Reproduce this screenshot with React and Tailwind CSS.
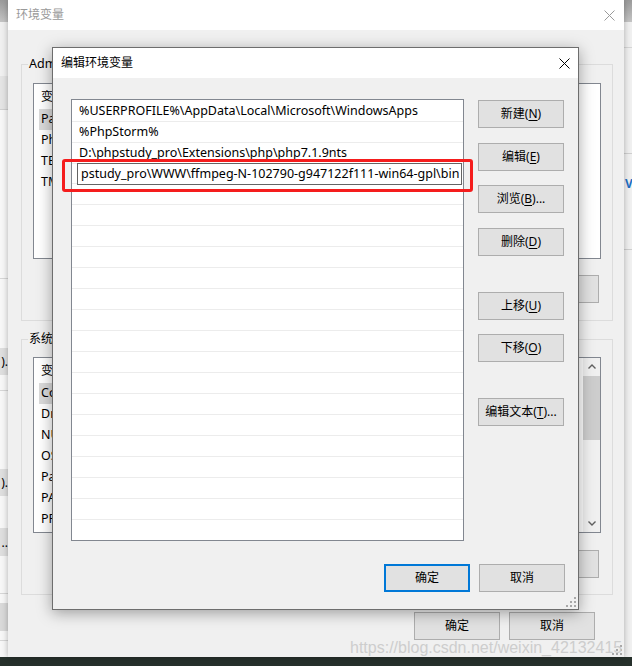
import React from "react";

const ui = "font-['Noto_Sans','Noto_Sans_CJK_SC',sans-serif]";

const Key = ({ k }) => <span className="underline underline-offset-[2px]">{k}</span>;

const CloseX = ({ color }) => (
  <svg width="11" height="11" viewBox="0 0 11 11">
    <path d="M0.5 0.5L10.5 10.5M10.5 0.5L0.5 10.5" stroke={color} strokeWidth="1" fill="none" />
  </svg>
);

const Grip = () => (
  <svg width="10" height="10" viewBox="0 0 10 10">
    <g fill="#a8a8a8">
      <rect x="8" y="0" width="2" height="2" />
      <rect x="4" y="4" width="2" height="2" />
      <rect x="8" y="4" width="2" height="2" />
      <rect x="0" y="8" width="2" height="2" />
      <rect x="4" y="8" width="2" height="2" />
      <rect x="8" y="8" width="2" height="2" />
    </g>
  </svg>
);

const Chevron = ({ down }) => (
  <svg width="8" height="5" viewBox="0 0 8 5">
    <path d={down ? "M0.5 0.5L4 4L7.5 0.5" : "M0.5 4.5L4 1L7.5 4.5"} stroke="#606060" strokeWidth="1.4" fill="none" />
  </svg>
);

function Button({ children, primary = false, className = "" }) {
  return (
    <div
      className={`flex h-[28px] w-[86px] shrink-0 items-center justify-center bg-[#e1e1e1] text-[12px] text-black ${
        primary ? "border-2 border-[#0078d7]" : "border border-[#adadad]"
      } ${className}`}
    >
      {children}
    </div>
  );
}

// only the first letters of these lists show beside the dialog
const userVars = ["Path", "PhpStorm", "TEMP", "TMP"];
const sysVars = ["ComSpec", "DriverData", "NUMBER_OF_PROCESSORS", "OS", "Path", "PATHEXT", "PROCESSOR_ARCHITECTURE"];

function VarList({ rows, scroll, className = "" }) {
  return (
    <div className={`flex h-[176px] border border-[#828790] bg-white ${className}`}>
      <div className="min-w-0 flex-1 overflow-hidden">
        <div className="flex h-[25px] items-center pl-[7px] text-[12px]">变量</div>
        {rows.map((name, i) => (
          <div
            key={name}
            className={`mx-[5px] flex h-[21px] w-[150px] items-center whitespace-nowrap pl-[2px] text-[12.5px] ${
              i === 0 ? "bg-[#dadada]" : ""
            }`}
          >
            {name}
          </div>
        ))}
      </div>
      {scroll && (
        <div className="flex w-[17px] flex-col bg-[#f0f0f0]">
          <div className="flex h-[17px] items-center justify-center">
            <Chevron />
          </div>
          <div className="mt-[1px] h-[64px] bg-[#cdcdcd]" />
          <div className="flex-1" />
          <div className="flex h-[17px] items-center justify-center">
            <Chevron down />
          </div>
        </div>
      )}
    </div>
  );
}

const pathRows = [
  "%USERPROFILE%\\AppData\\Local\\Microsoft\\WindowsApps",
  "%PhpStorm%",
  "D:\\phpstudy_pro\\Extensions\\php\\php7.1.9nts",
];

export default function App() {
  return (
    <div className={`relative h-[666px] w-[632px] overflow-hidden bg-[#26302b] text-black ${ui}`}>
      {/* window behind, left edge */}
      <div className="absolute left-0 top-0 flex h-[657px] w-[8px] flex-col bg-[#f7f7f7] text-[12px]">
        <div className="h-[22px] bg-gradient-to-b from-[#9a9a9a] to-[#c4c4c4]" />
        <div className="h-[54px] bg-[#f0f0f0]" />
        <div className="h-[34px] border-b border-[#d0d0d0] bg-[#e4e4e4]" />
        <div className="h-[168px]" />
        <div className="h-[1px] bg-[#d6d6d6]" />
        <div className="h-[69px]" />
        <div className="flex h-[27px] items-center justify-end bg-[#dedede] leading-none">).</div>
        <div className="h-[15px]" />
        <div className="h-[1px] bg-[#d6d6d6]" />
        <div className="h-[78px]" />
        <div className="flex h-[27px] items-center justify-end bg-[#dedede] leading-none">).</div>
        <div className="h-[32px]" />
        <div className="flex h-[28px] items-end justify-end bg-[#dedede] pb-[7px] leading-none">..</div>
        <div className="h-[37px]" />
        <div className="h-[1px] bg-[#d6d6d6]" />
        <div className="h-[9px]" />
        <div className="h-[28px] bg-[#d9d9d9]" />
        <div className="h-[9px]" />
        <div className="h-[1px] bg-[#d6d6d6]" />
      </div>

      {/* window behind, right edge */}
      <div className="absolute left-[624px] top-0 flex h-[657px] w-[8px] flex-col bg-[#f0f0f0] text-[12px]">
        <div className="h-[22px] bg-gradient-to-b from-[#9a9a9a] to-[#c4c4c4]" />
        <div className="h-[25px]" />
        <div className="h-[1px] bg-[#d6d6d6]" />
        <div className="h-[105px]" />
        <div className="h-[1px] bg-[#cfcfcf]" />
        <div className="flex h-[60px] items-center pl-[1px] font-bold leading-none text-[#1e6fc4]">V</div>
        <div className="h-[35px]" />
        <div className="h-[1px] bg-[#cfcfcf]" />
      </div>

      {/* 环境变量 */}
      <div className="absolute left-[8px] top-0 flex h-[657px] w-[616px] flex-col bg-[#f0f0f0] shadow-[0_0_6px_rgba(0,0,0,0.3)]">
        <div className="flex h-[30px] shrink-0 items-center justify-between bg-white">
          <span className="pl-[8px] text-[12px] text-[#999999]">环境变量</span>
          <div className="flex w-[30px] justify-center">
            <CloseX color="#9a9a9a" />
          </div>
        </div>
        <div className="flex flex-col pl-[13px] pr-[11px] pt-[34px]">
          <div className="border border-[#dcdcdc] px-[11px] pb-[17px]">
            <div className="-mt-[9px] ml-[-5px] w-fit bg-[#f0f0f0] px-[1px] text-[12.5px] leading-[16px]">
              Administrator 的用户变量(<Key k="U" />)
            </div>
            <VarList rows={userVars} className="mt-[11px]" />
            <div className="mt-[16px] flex justify-end gap-[9px] pr-[2px]">
              <Button>新建(<Key k="N" />)...</Button>
              <Button>编辑(<Key k="E" />)...</Button>
              <Button>删除(<Key k="D" />)</Button>
            </div>
          </div>
          <div className="mt-[18px] border border-[#dcdcdc] px-[11px] pb-[16px]">
            <div className="-mt-[9px] ml-[-5px] w-fit bg-[#f0f0f0] px-[1px] text-[12px] leading-[16px]">
              系统变量(<Key k="S" />)
            </div>
            <VarList rows={sysVars} scroll className="mt-[10px]" />
            <div className="mt-[17px] flex justify-end gap-[9px] pr-[2px]">
              <Button>新建(<Key k="W" />)...</Button>
              <Button>编辑(<Key k="I" />)...</Button>
              <Button>删除(<Key k="L" />)</Button>
            </div>
          </div>
          <div className="mt-[17px] flex justify-end gap-[9px] pr-[18px]">
            <Button>确定</Button>
            <Button>取消</Button>
          </div>
        </div>
        <div className="absolute bottom-[2px] right-[2px]">
          <Grip />
        </div>
      </div>

      {/* 编辑环境变量 */}
      <div className="absolute left-[52px] top-[47px] flex h-[563px] w-[527px] flex-col border border-[#6d6d6d] bg-[#f0f0f0] shadow-[0_3px_14px_rgba(0,0,0,0.35)]">
        <div className="flex h-[30px] shrink-0 items-center justify-between bg-white">
          <span className="pl-[8px] text-[12px]">编辑环境变量</span>
          <div className="flex w-[28px] justify-center">
            <CloseX color="#000000" />
          </div>
        </div>
        <div className="flex pl-[18px] pt-[21px]">
          <div className="h-[442px] w-[393px] overflow-hidden border border-[#828790] bg-white pt-[1px]">
            {Array.from({ length: 21 }).map((_, i) => (
              <div key={i} className="h-[21px] border-b border-[#ececec]">
                {i < 3 && (
                  <div className="flex h-[20px] items-center whitespace-nowrap pl-[7px] text-[12.5px]">{pathRows[i]}</div>
                )}
                {i === 3 && (
                  <div className="-mt-[1px] ml-[5px] mr-[1px] flex h-[22px] items-center overflow-hidden whitespace-nowrap border border-[#646464] bg-white pl-[3px] text-[12.5px]">
                    pstudy_pro\WWW\ffmpeg-N-102790-g947122f111-win64-gpl\bin
                  </div>
                )}
              </div>
            ))}
          </div>
          <div className="ml-[14px] flex flex-col">
            <Button className="mt-[1px]">新建(<Key k="N" />)</Button>
            <Button className="mt-[15px]">编辑(<Key k="E" />)</Button>
            <Button className="mt-[14px]">浏览(<Key k="B" />)...</Button>
            <Button className="mt-[15px]">删除(<Key k="D" />)</Button>
            <Button className="mt-[36px]">上移(<Key k="U" />)</Button>
            <Button className="mt-[14px]">下移(<Key k="O" />)</Button>
            <Button className="mt-[36px]">编辑文本(<Key k="T" />)...</Button>
          </div>
        </div>
        <div className="mt-[23px] flex justify-end gap-[9px] pr-[13px]">
          <Button primary>确定</Button>
          <Button>取消</Button>
        </div>
        <div className="absolute bottom-[2px] right-[2px]">
          <Grip />
        </div>
      </div>

      {/* annotation */}
      <div className="absolute left-[62px] top-[159px] h-[33px] w-[411px] rounded-[3px] border-[3px] border-[#f51d1d]" />

      {/* watermark */}
      <div className="absolute left-[350px] top-[638px] font-['Liberation_Sans',sans-serif] text-[16px] leading-[20px] text-[#cdcdcd]">
        https://blog.csdn.net/weixin_42132415
      </div>
    </div>
  );
}
